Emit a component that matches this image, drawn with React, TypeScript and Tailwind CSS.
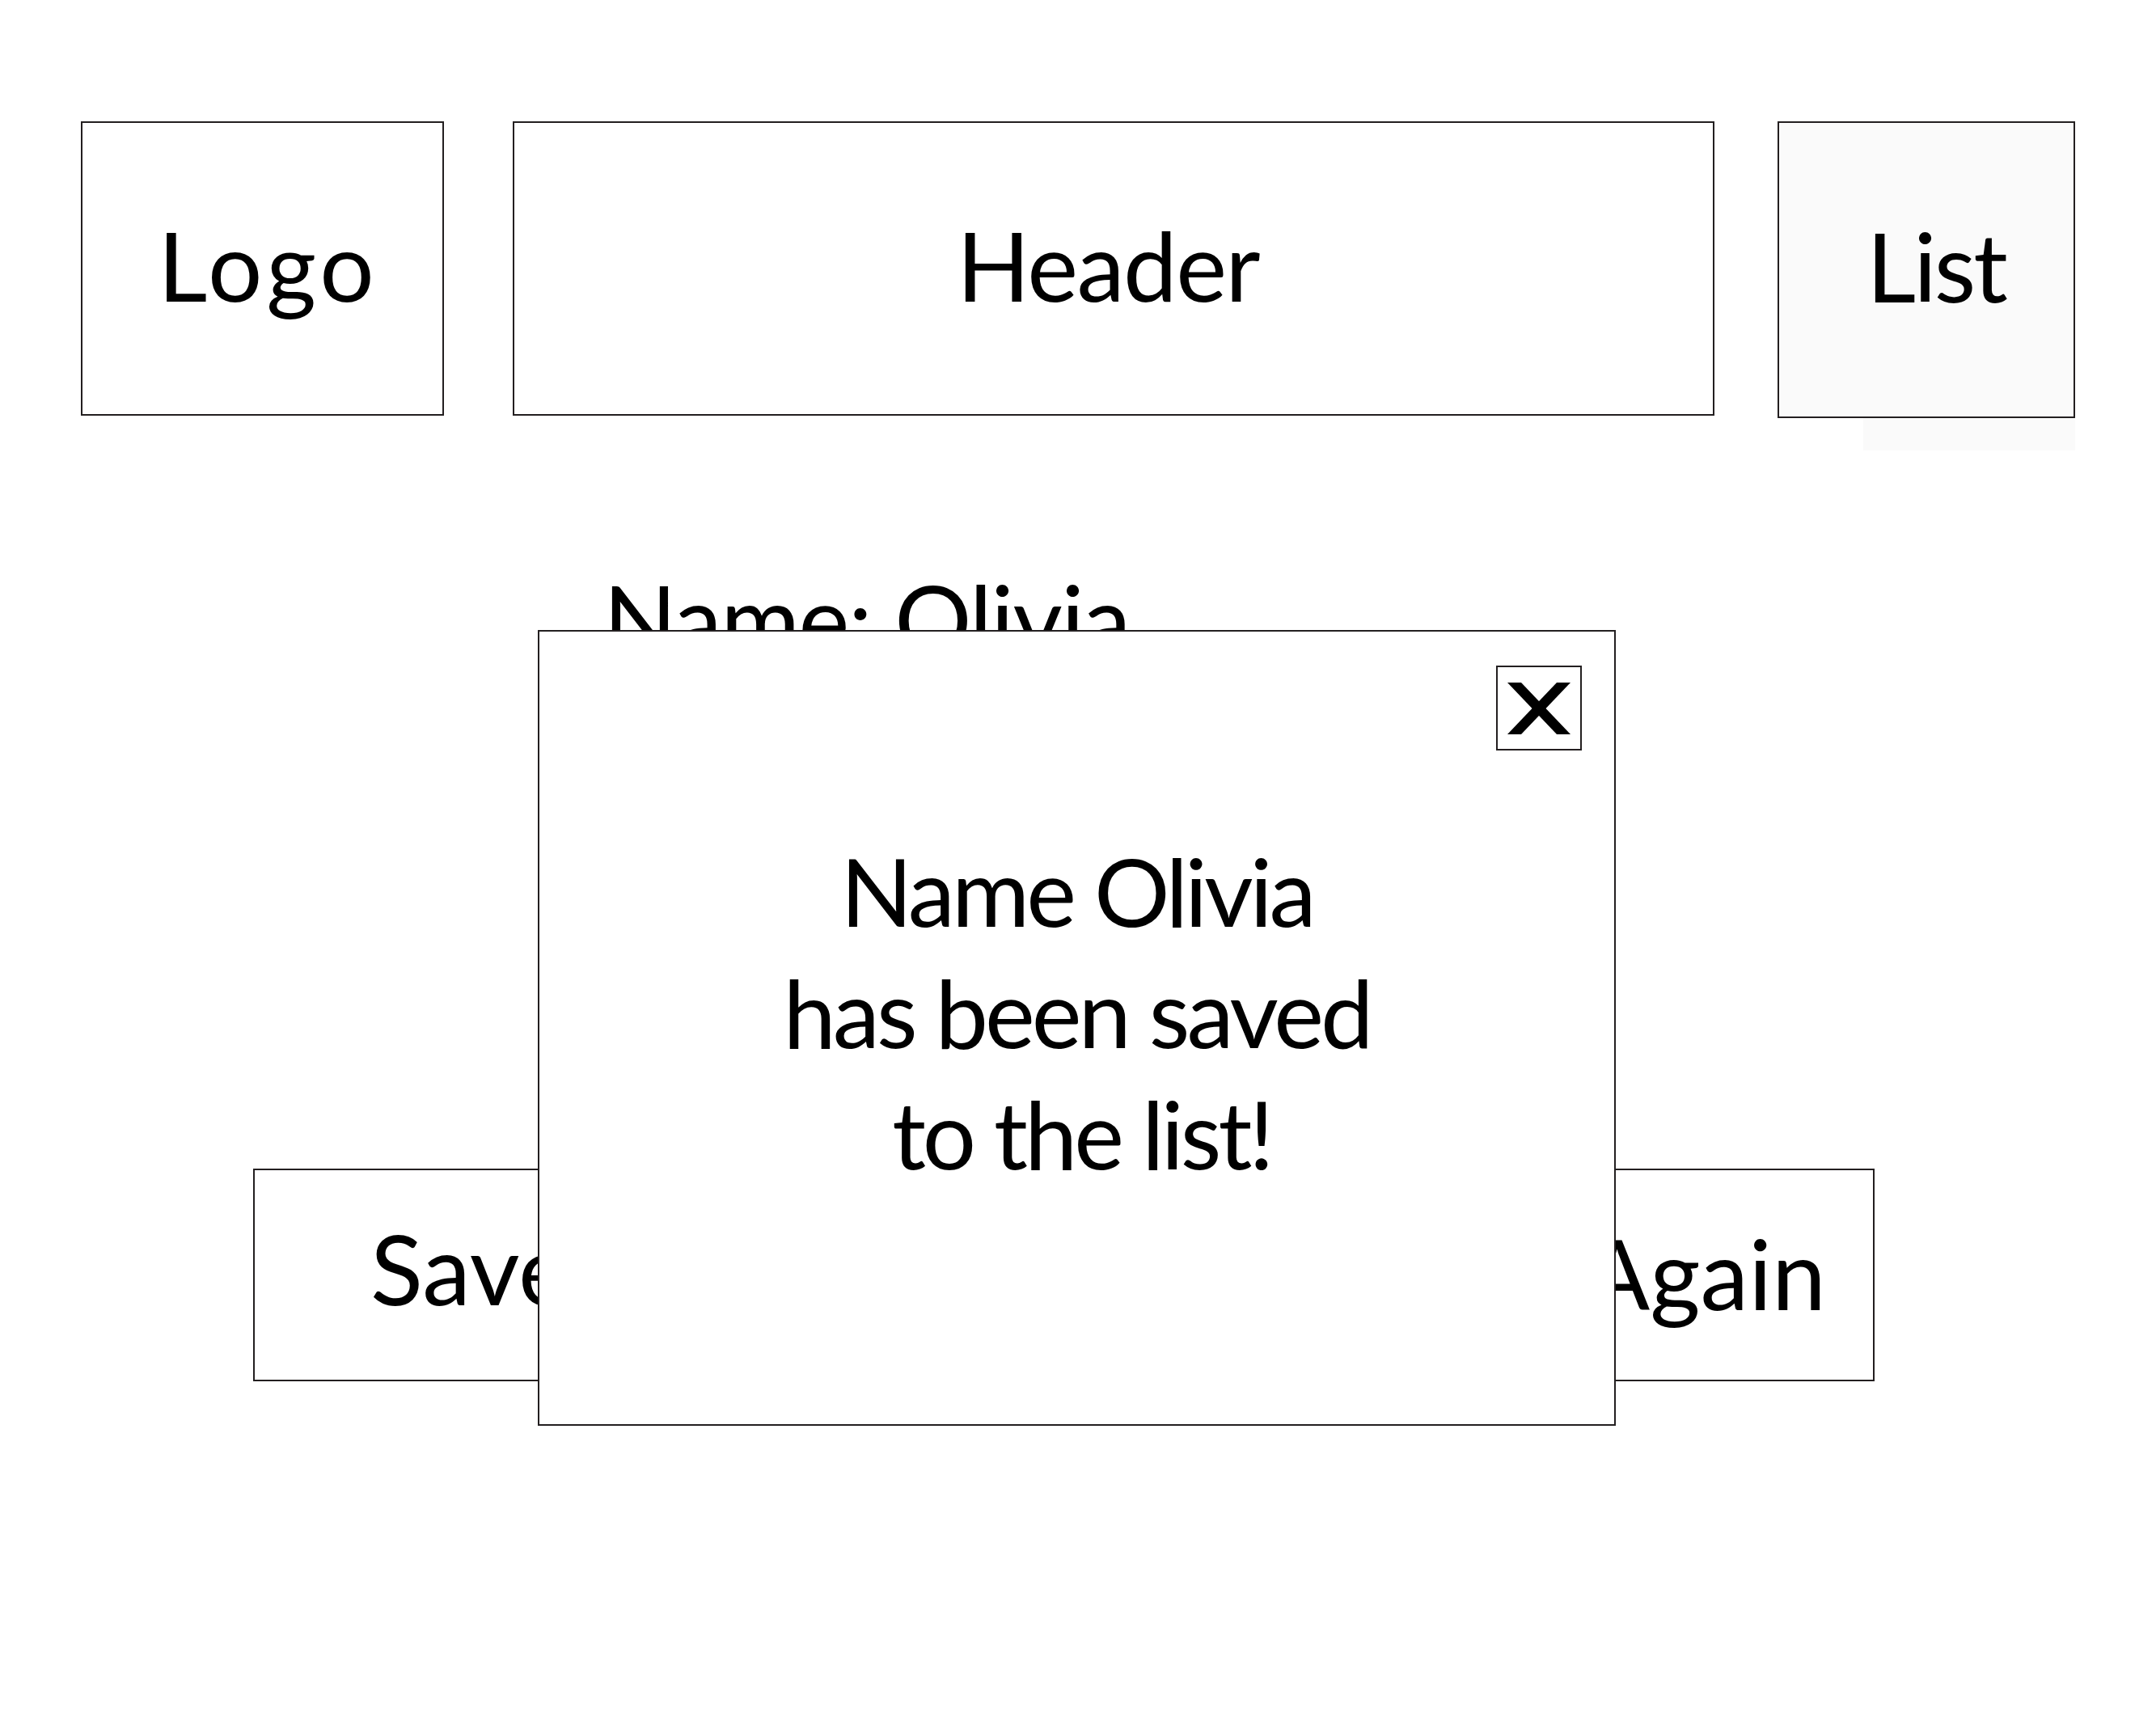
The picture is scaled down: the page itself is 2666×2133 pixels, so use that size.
export default function App() {
  const box = "flex items-center justify-center border-2 border-[#231f20] pb-[10px] text-[119px] leading-none";

  return (
    <main className="relative min-h-screen w-full bg-white font-['Lato',sans-serif] text-black">
      <header className="flex items-start pl-[100px] pt-[150px]">
        <div className={`${box} h-[364px] w-[449px] pl-[14px] tracking-[5px]`}>Logo</div>
        <div className={`${box} ml-[85px] h-[364px] w-[1486px] pr-[14px] tracking-[-1.6px]`}>Header</div>
        <div className="ml-[78px] flex flex-col">
          <div className={`${box} h-[367px] w-[368px] bg-[#fafafa] pl-[24px] tracking-[-3px]`}>List</div>
          <div className="ml-[106px] h-[40px] w-[262px] bg-[#fafafa]" />
        </div>
      </header>

      <p className="mt-[148px] pl-[746px] text-[119px] leading-none tracking-[-1.5px]">Name: Olivia</p>

      <div className="mt-[621px] flex pl-[313px]">
        <button className="flex h-[263px] w-[700px] items-center justify-start border-2 border-[#231f20] pb-[18px] pl-[143px] text-[120px] leading-none">
          Save
        </button>
        <button className="ml-[605px] flex h-[263px] w-[700px] items-center justify-end border-2 border-[#231f20] pb-[6px] pr-[58px] text-[120px] leading-none">
          Try Again
        </button>
      </div>

      {/* confirmation popup sits over the form */}
      <div className="absolute left-[665px] top-[779px] h-[984px] w-[1333px] border-2 border-[#231f20] bg-white">
        <button className="absolute right-[40px] top-[42px] flex h-[105px] w-[106px] items-center justify-center border-2 border-[#231f20] bg-white">
          <svg width="78" height="64" viewBox="0 0 78 64">
            <polygon points="0,0 17,0 78,64 61,64" fill="#000" />
            <polygon points="61,0 78,0 17,64 0,64" fill="#000" />
          </svg>
        </button>
        <p className="pt-[245px] text-center text-[117px] leading-[150px] tracking-[-4px]">
          Name Olivia
          <br />
          has been saved
          <br />
          <span className="pl-[12px]">to the list!</span>
        </p>
      </div>
    </main>
  );
}
